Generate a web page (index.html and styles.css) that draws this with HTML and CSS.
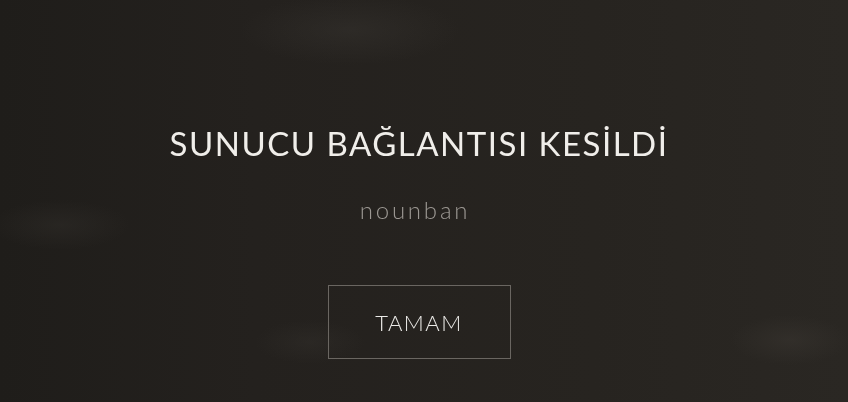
FILE: index.html
```html
<!DOCTYPE html>
<html lang="tr">
<head>
    <meta charset="UTF-8">
    <meta name="viewport" content="width=device-width, initial-scale=1.0">
    <title>Bağlantı kesildi</title>
    <link rel="stylesheet" href="styles.css">
</head>
<body>
    <div class="backdrop"></div>
    <div class="dialog">
        <h1 class="title">SUNUCU BAĞLANTISI KESİLDİ</h1>
        <p class="reason">nounban</p>
        <button class="ok-btn">TAMAM</button>
    </div>
</body>
</html>
```

FILE: styles.css
```css
html, body {
    height: 100%;
}
body {
    margin: 0;
    overflow: hidden;
    background-color: #24211e;
    font-family: "Lato", "Open Sans", sans-serif;
    color: #f0eeea;
}
/* blurred game scene behind the dialog */
.backdrop {
    position: fixed;
    inset: 0;
    background:
        radial-gradient(ellipse 110px 35px at 350px 30px, rgba(58, 55, 51, 0.4), transparent),
        radial-gradient(ellipse 70px 25px at 60px 225px, rgba(52, 49, 45, 0.4), transparent),
        radial-gradient(ellipse 60px 25px at 790px 340px, rgba(60, 56, 51, 0.45), transparent),
        radial-gradient(ellipse 55px 22px at 310px 342px, rgba(52, 49, 45, 0.4), transparent),
        linear-gradient(90deg, #1f1d1a 0%, #24211e 30%, #272420 70%, #2a2723 100%);
}
.dialog {
    position: relative;
    display: flex;
    flex-direction: column;
    align-items: center;
    padding: 121px 10px 0 0;
}
.title {
    margin: 0;
    font-weight: 400;
    font-size: 33px;
    line-height: 44px;
    letter-spacing: 1.5px;
}
.reason {
    margin: 30px 8px 0 0;
    font-size: 24px;
    font-weight: 300;
    line-height: 30px;
    letter-spacing: 2.8px;
    color: #9c9893;
}
.ok-btn {
    margin-top: 60px;
    width: 183px;
    height: 74px;
    background: transparent;
    border: 1px solid #6a6661;
    color: #ecebe8;
    font-family: inherit;
    font-size: 22px;
    font-weight: 300;
    letter-spacing: 1.5px;
    cursor: pointer;
}
```
